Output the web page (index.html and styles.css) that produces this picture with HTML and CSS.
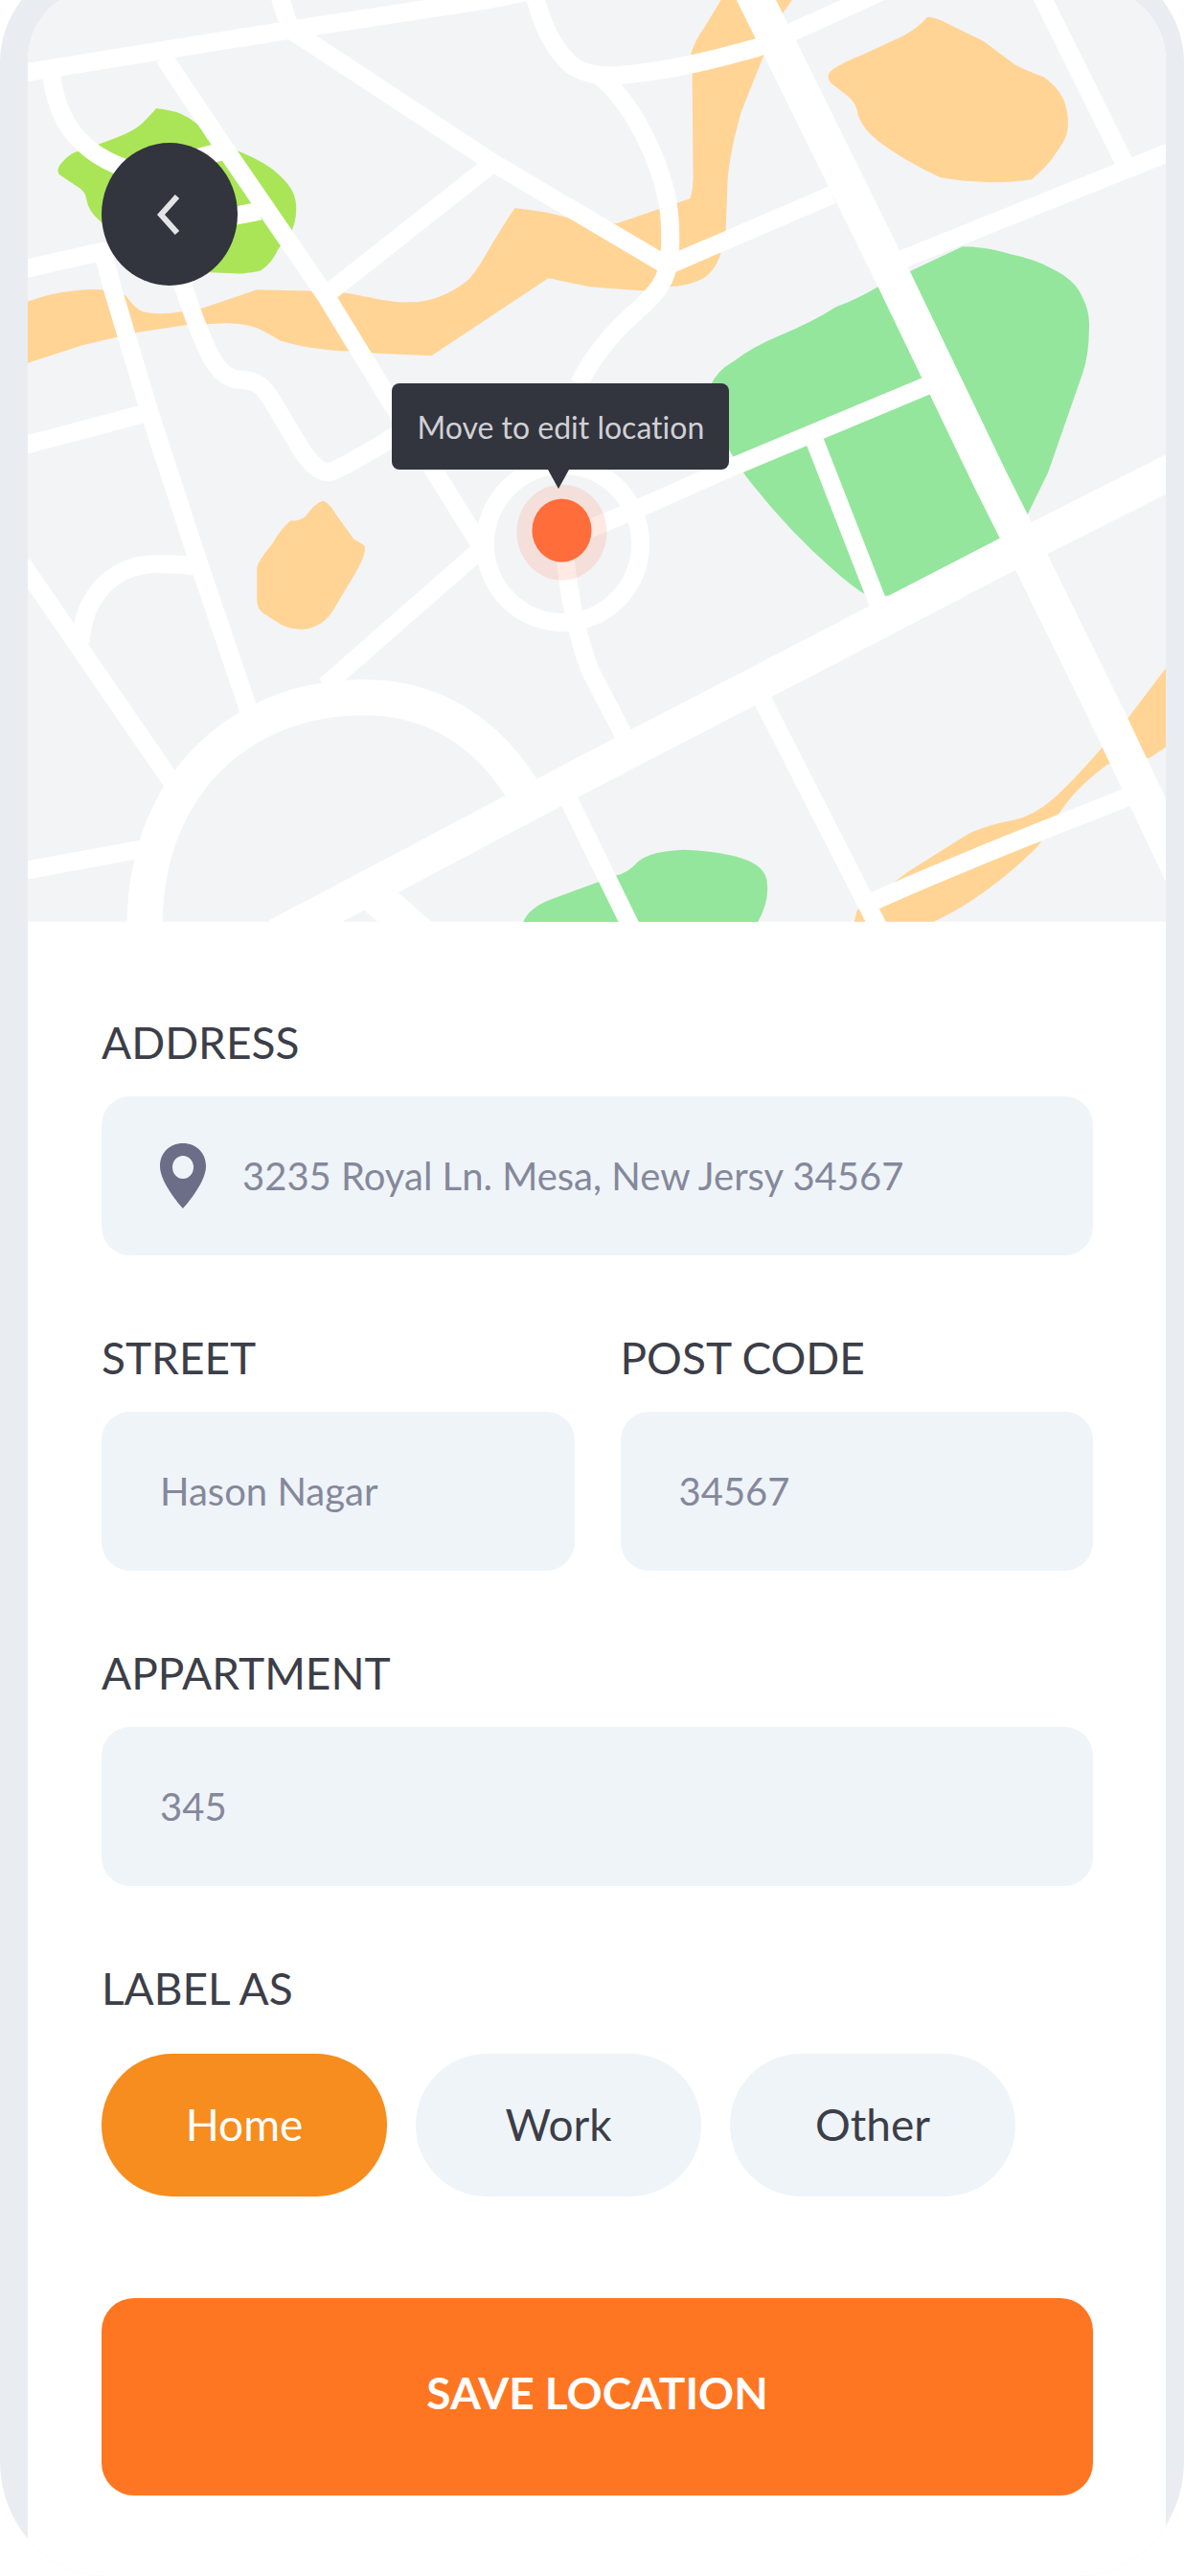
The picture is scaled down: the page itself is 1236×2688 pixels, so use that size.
FILE: index.html
```html
<!DOCTYPE html>
<html lang="en">
<head>
<meta charset="utf-8">
<meta name="viewport" content="width=device-width, initial-scale=1">
<title>Edit location</title>
<link rel="stylesheet" href="styles.css">
</head>
<body>
<div class="phone">
  <main class="screen">
    <section class="map">
      <svg class="map-art" viewBox="30 -13 1187 974" aria-hidden="true">
        <rect class="ground" x="30" y="-13" width="1187" height="974"/>
        <g class="sand">
          <path d="M28 315Q55 305 79 303Q95 301 107 302L132 308Q142 322 150 325Q168 329 190 325L210 322L269 302L354 304C395 311 408 316 430 315C450 315 470 307 488 293C500 283 515 250 538 217Q566 219 593 227L644 233L691 217L721 207Q724 197 724 187L723 77L722 55Q726 42 735 30L762 -15L838 -15L818 13L798 57Q780 102 774 117Q762 160 760 187L758 240L752 267Q746 283 735 290Q720 298 699 299Q690 304 671 303Q640 301 616 299L573 290L451 371L386 368L360 366Q320 364 293 355Q280 347 269 342Q255 337 237 337L194 339L142 347L87 360L28 379Z"/>
          <path d="M968 18Q960 28 944 37L901 57Q880 65 869 73Q862 78 867 86L885 100Q895 108 896 120Q901 135 917 147Q945 168 982 185Q1005 189 1035 190Q1060 190 1077 187Q1095 172 1102 160C1112 147 1115 140 1115 128Q1115 115 1110 103Q1102 88 1089 80Q1072 74 1059 67L1027 43L984 22Q972 17 968 18Z"/>
          <path d="M338 522Q345 525 352 537L370 562L380 568Q386 572 372 597L348 637Q342 647 332 652Q322 657 312 656Q299 655 289 648L275 639Q270 635 269 627L269 592Q270 585 285 567Q295 550 304 543Q315 543 320 538Q330 524 338 522Z"/>
          <path d="M1222 690L1178 748L1150 780Q1115 820 1098 834Q1080 850 1058 855Q1030 860 1010 870L948 909L895 949L892 961L975 961Q1030 935 1082 884Q1090 875 1090 868L1110 842Q1125 820 1156 797L1200 790L1222 776Z"/>
        </g>
        <path class="lime" d="M164 113Q185 115 198 123Q217 136 217 145L251 158Q280 170 293 183C306 195 310 205 310 217Q310 232 304 243L291 260Q285 274 273 282Q260 286 245 285L170 282L105 230Q93 220 91 207Q90 200 84 196L63 182Q59 177 65 170Q75 158 85 157L113 147Q140 138 150 128Q160 118 164 113Z"/>
        <g class="park">
          <path d="M1005 257Q1030 257 1055 265Q1080 270 1098 280Q1123 292 1130 310Q1138 325 1137 342Q1137 370 1130 390L1094 493L1073 536L1043 562L928 621L907 622Q890 612 869 593Q820 550 778 495L762 470L742 402Q750 385 766 377Q785 362 814 350Q850 335 873 320Q895 312 915 300L952 282Z"/>
          <path d="M546 964Q550 948 575 938L643 913Q655 911 667 898Q680 887 715 886Q750 887 775 895Q800 903 801 920Q804 940 790 964Z"/>
        </g>
        <g class="road">
          <path d="M20 77L304 31L508 0L570 -12"/>
          <path d="M289 -15L304 31L514 169L697 277L869 203"/>
          <path d="M172 60L237 157L340 307L411 423L455 493L502 568"/>
          <path d="M514 171L344 305"/>
          <path d="M55 80C58 105 65 122 77 138C90 155 112 170 140 178M232 158L185 170M272 220L230 228"/>
          <path d="M20 282L108 262L119 303L157 430L206 580L262 745"/>
          <path d="M20 466L156 430"/>
          <path d="M188 285Q205 340 221 372Q234 396 252 396C270 396 277 405 285 418L316 470Q333 495 346 492Q365 484 411 456L450 435"/>
          <path d="M556 -15C565 25 580 55 600 70C625 84 650 79 690 73C735 66 770 55 790 50L830 32L901 0L940 -18"/>
          <path d="M625 78C665 110 700 185 700 240C702 290 690 300 670 320C640 345 620 370 605 400"/>
          <path d="M938 272L1222 158M1082 -15L1175 172"/>
          <path d="M978 398L762 488L667 530L588 563"/>
          <path d="M849 455L918 632"/>
          <path d="M500 575L340 715"/>
          <ellipse cx="588" cy="567" rx="81" ry="82"/>
          <path d="M590 575Q596 645 617 700L656 775"/>
          <path d="M24 588L180 815"/>
          <path d="M85 670C88 620 120 588 165 588Q190 588 210 591"/>
          <path d="M20 909L150 885"/>
          <path d="M590 825L660 968"/>
          <path d="M794 725L918 968M905 943Q990 904 1180 830"/>
        </g>
        <g class="avenue">
          <path d="M780 -20L934 292L1034 500L1067 566L1156 747L1245 935"/>
          <path d="M1240 483L1067 570L917 648L616 804L419 908L290 976M376 920L440 976"/>
          <path d="M152 970C150 825 245 728 380 727C455 727 510 765 548 826"/>
        </g>
        <ellipse class="halo" cx="587" cy="555" rx="47" ry="50"/>
        <ellipse class="dot" cx="587" cy="553" rx="31" ry="33"/>
      </svg>
      <button class="back" type="button" aria-label="Back">
        <svg class="back-icon" viewBox="0 0 26 46" aria-hidden="true"><path d="M21 4L4 23L21 42"/></svg>
      </button>
      <div class="tip">Move to edit location</div>
    </section>

    <form class="form">
      <div class="field">
        <label class="caption" for="address">ADDRESS</label>
        <div class="box">
          <svg class="pin" viewBox="0 0 48 68" aria-hidden="true"><path fill-rule="evenodd" d="M24 0C10 0 0 10 0 24C0 42 24 68 24 68S48 42 48 24C48 10 38 0 24 0ZM24 13A11 12 0 1 1 24 37A11 12 0 1 1 24 13Z"/></svg>
          <input class="entry" id="address" type="text" value="3235 Royal Ln. Mesa, New Jersy 34567">
        </div>
      </div>
      <div class="pair">
        <div class="field">
          <label class="caption" for="street">STREET</label>
          <div class="box"><input class="entry" id="street" type="text" value="Hason Nagar"></div>
        </div>
        <div class="field">
          <label class="caption" for="postcode">POST CODE</label>
          <div class="box"><input class="entry" id="postcode" type="text" value="34567"></div>
        </div>
      </div>
      <div class="field">
        <label class="caption" for="apartment">APPARTMENT</label>
        <div class="box"><input class="entry" id="apartment" type="text" value="345"></div>
      </div>
      <fieldset class="labels">
        <legend class="caption">LABEL AS</legend>
        <div class="pills">
          <label class="pill"><input class="pill-radio" type="radio" name="label" checked>Home</label>
          <label class="pill"><input class="pill-radio" type="radio" name="label">Work</label>
          <label class="pill"><input class="pill-radio" type="radio" name="label">Other</label>
        </div>
      </fieldset>
      <button class="save" type="submit">SAVE LOCATION</button>
    </form>
  </main>
</div>
</body>
</html>
```
FILE: styles.css
```css
* { box-sizing: border-box; }

body {
  margin: 0;
  background: #fff;
  color: #3c3e48;
  font-family: Lato, "Open Sans", sans-serif;
  font-size: 46px;
  font-variant-ligatures: none;
  line-height: 50px;
}

/* Device frame; its top edge runs off the page */
.phone {
  margin-top: -40px;
  padding: 27px 19px 0 29px;
  background: #e9edf2;
  border-radius: 105px 105px 110px 110px / 105px 105px 120px 120px;
  overflow: hidden;
}

.screen {
  background: #fff;
  border-radius: 76px 76px 0 0;
  overflow: hidden;
}

/* Map */
.map { position: relative; }
.map-art { display: block; width: 100%; height: auto; }
.ground { fill: #f3f4f6; }
.sand { fill: #ffd495; }
.lime { fill: #aae558; }
.park { fill: #94e69c; }
.road, .avenue { fill: none; stroke: #fff; stroke-linejoin: round; }
.road { stroke-width: 19px; }
.avenue { stroke-width: 37px; }
.halo { fill: #ff6d3a; fill-opacity: .15; }
.dot { fill: #ff6d3a; }

.back {
  position: absolute;
  left: 77px;
  top: 162px;
  display: grid;
  place-items: center;
  width: 142px;
  height: 149px;
  padding: 0;
  border: 0;
  border-radius: 50%;
  background: #32343e;
}
.back-icon {
  width: 26px;
  height: 46px;
  fill: none;
  stroke: #e4e4e6;
  stroke-width: 6px;
}

.tip {
  position: absolute;
  left: 47%;
  top: 413px;
  width: 352px;
  margin-left: -178px;
  padding: 21px 0 19px;
  border-radius: 8px;
  background: #32343e;
  color: #d0d1d4;
  font-size: 32px;
  text-align: center;
}
.tip::after {
  content: "";
  position: absolute;
  left: 50%;
  top: 100%;
  margin-left: -13px;
  border: 11px solid transparent;
  border-top: 20px solid #32343e;
  border-bottom: 0;
}

/* Form */
.form {
  display: flex;
  flex-direction: column;
  gap: 82px;
  padding: 101px 76px 84px 77px;
}
.field {
  display: flex;
  flex-direction: column;
  gap: 31px;
  min-width: 0;
}
.pair { display: grid; grid-template-columns: 1fr 1fr; gap: 48px; }
.caption { padding: 0; }

.box {
  display: flex;
  align-items: center;
  gap: 38px;
  height: 166px;
  padding: 0 61px;
  border-radius: 30px;
  background: #eff4f9;
}
.pin { flex: none; width: 48px; height: 68px; fill: #6b6e86; }
.entry {
  flex: 1;
  min-width: 0;
  padding: 0;
  border: 0;
  background: transparent;
  color: #85889b;
  font: inherit;
  font-size: 40px;
}

.labels { min-width: 0; margin: 0; padding: 0; border: 0; }
.pills { display: flex; gap: 30px; padding-top: 43px; }
.pill {
  position: relative;
  display: grid;
  place-items: center;
  width: 298px;
  height: 149px;
  border-radius: 74px;
  background: #eff4f9;
}
.pill:has(:checked) { background: #f68d1e; color: #fff; }
.pill-radio {
  position: absolute;
  inset: 0;
  width: 100%;
  height: 100%;
  margin: 0;
  opacity: 0;
}

.save {
  height: 206px;
  margin-top: 24px;
  padding: 0 0 8px;
  border: 0;
  border-radius: 34px;
  background: #ff7622;
  color: #fff;
  font: inherit;
  font-weight: 700;
}
```
